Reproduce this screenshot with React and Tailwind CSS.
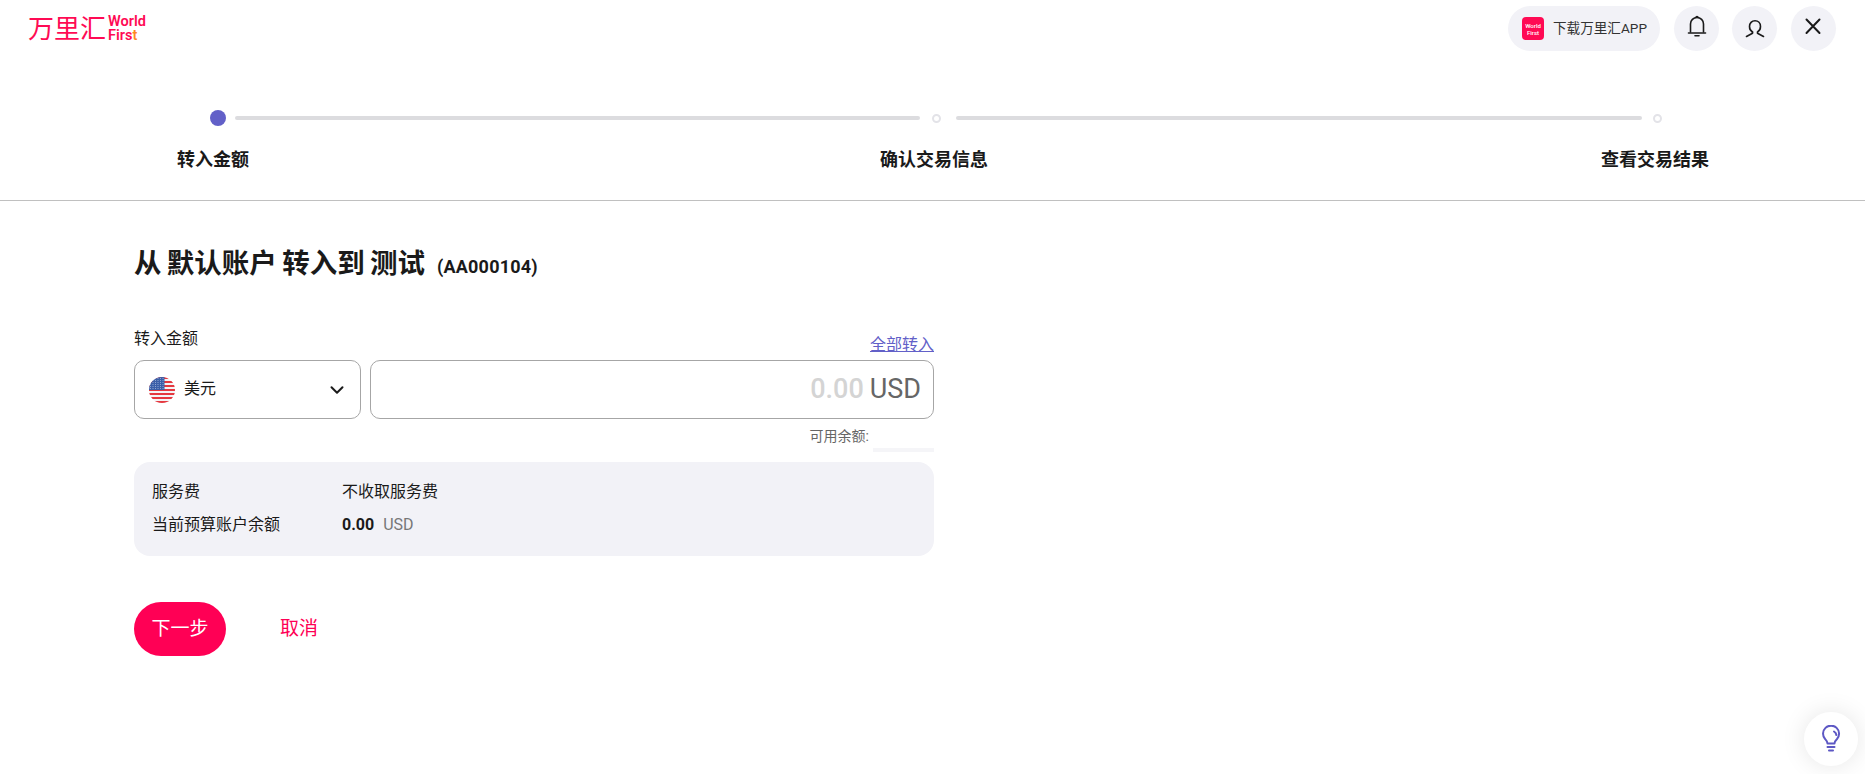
import { ChevronDown } from 'lucide-react'

const font = { fontFamily: 'Roboto, "Noto Sans CJK SC", sans-serif' }

const stripes = [0, 4, 8, 12, 16, 20, 24]
const starRows = [1.5, 3.5, 5.5, 7.5, 9.5, 11.5]
const starCols = [1.5, 4, 6.5, 9, 11.5, 14]

const UsFlag = () => (
  <svg width="26" height="26" viewBox="0 0 26 26">
    <defs>
      <clipPath id="flagClip">
        <circle cx="13" cy="13" r="13" />
      </clipPath>
    </defs>
    <g clipPath="url(#flagClip)">
      <rect width="26" height="26" fill="#f4f4f6" />
      {stripes.map((y) => (
        <rect key={y} y={y} width="26" height="2" fill="#e5383f" />
      ))}
      <rect width="15.5" height="13" fill="#3b5fa8" />
      {starRows.map((y) =>
        starCols.map((x) => <circle key={`${x}-${y}`} cx={x} cy={y} r="0.5" fill="#a9bce0" />)
      )}
    </g>
  </svg>
)

const Logo = () => (
  <div className="flex items-center text-[#ff0a54]">
    <span className="text-[26px] leading-none font-normal">万里汇</span>
    <span className="ml-[2px] flex flex-col text-[14.5px] leading-[14px] font-semibold">
      <span>World</span>
      <span>
        Firs<span className="text-[#ff8a1f]">t</span>
      </span>
    </span>
  </div>
)

const RoundButton = ({ className = '', children }) => (
  <button className={`w-[45px] h-[45px] rounded-full bg-[#f2f2f7] flex items-center justify-center ${className}`}>
    {children}
  </button>
)

const StepDot = ({ className = '' }) => (
  <span className={`block w-[9px] h-[9px] rounded-full border-2 border-[#e3e3e8] bg-white shrink-0 ${className}`} />
)

const App = () => {
  return (
    <div style={font} className="relative min-h-[774px] bg-white text-[#1a1a1a] overflow-hidden">
      <header className="h-[58px] flex items-start justify-between pt-[6px] pl-[28px] pr-[29px]">
        <div className="pt-[9px]">
          <Logo />
        </div>
        <div className="flex items-center">
          <button className="h-[45px] w-[152px] rounded-full bg-[#f2f2f7] flex items-center pl-[14px] text-[13.6px] text-[#333]">
            <span className="w-[22px] h-[23px] rounded-[4px] bg-[#ff0a54] text-white text-[6px] leading-[7px] font-medium flex flex-col items-center justify-center">
              <span>World</span>
              <span>First</span>
            </span>
            <span className="ml-[9px]">下载万里汇APP</span>
          </button>
          <RoundButton className="ml-[14px]">
            <svg width="24" height="24" viewBox="0 0 24 24" fill="none" stroke="#1a1a1a" strokeWidth="1.6" strokeLinecap="round" strokeLinejoin="round" className="-mt-[5px]">
              <path d="M5.5 18V10a6.5 6.5 0 0 1 13 0v8" />
              <path d="M3.5 19h17" />
              <path d="M10 21.8h4" />
              <path d="M11 3.5a1 1 0 0 1 2 0" />
            </svg>
          </RoundButton>
          <RoundButton className="ml-[13px]">
            <svg width="24" height="24" viewBox="0 0 24 24" fill="none" stroke="#1a1a1a" strokeWidth="1.6" strokeLinecap="round" strokeLinejoin="round">
              <path d="M9.5 15C7.3 13.8 6.5 11.7 6.5 9.5 6.5 6.2 8.8 3.8 12 3.8s5.5 2.4 5.5 5.7c0 2.2-.8 4.3-3 5.5v1.2l6 3.3" />
              <path d="M9.5 15v1.2l-6 3.3" />
            </svg>
          </RoundButton>
          <RoundButton className="ml-[14px]">
            <svg width="20" height="20" viewBox="0 0 20 20" fill="none" stroke="#1a1a1a" strokeWidth="2" strokeLinecap="round" className="-mt-[5px] -ml-[1px]">
              <path d="M3.5 3.5l13 13.5M16.5 3.5L3.5 17" />
            </svg>
          </RoundButton>
        </div>
      </header>

      <section className="h-[143px] border-b border-[#c0c0c0] pt-[52px]">
        <div className="flex items-center h-[16px] pl-[210px]">
          <span className="w-[16px] h-[16px] rounded-full bg-[#6260c8] shrink-0" />
          <span className="ml-[9px] w-[685px] h-[4px] rounded-full bg-[#dcdcdf]" />
          <StepDot className="ml-[12px]" />
          <span className="ml-[15px] w-[686px] h-[4px] rounded-full bg-[#dcdcdf]" />
          <StepDot className="ml-[11px]" />
        </div>
        <div className="flex mt-[21px] pl-[177px] text-[18px] leading-[26px] font-bold">
          <span>转入金额</span>
          <span className="ml-[631px]">确认交易信息</span>
          <span className="ml-[613px]">查看交易结果</span>
        </div>
      </section>

      <main className="pl-[134px] w-[934px]">
        <h1 className="mt-[44px] text-[27.5px] leading-[38px] font-bold flex items-baseline [word-spacing:-1.5px]">
          从 默认账户 转入到 测试
          <span className="ml-[12px] text-[18px] font-bold tracking-[0.2px]">(AA000104)</span>
        </h1>

        <div className="mt-[41px] flex items-end justify-between">
          <span className="text-[16px] leading-[24px]">转入金额</span>
          <a className="text-[16px] leading-[24px] -mb-[6px] text-[#6260c8] underline">全部转入</a>
        </div>

        <div className="mt-[9px] flex gap-[9px]">
          <div className="w-[227px] h-[59px] rounded-[10px] border border-[#a6a6a6] flex items-center pl-[14px] pr-[12px]">
            <UsFlag />
            <span className="ml-[9px] text-[16px] -mt-[1px]">美元</span>
            <ChevronDown size={22} strokeWidth={2.2} className="ml-auto text-[#1a1a1a]" />
          </div>
          <div className="flex-1 h-[59px] rounded-[10px] border border-[#a6a6a6] flex items-center justify-end pr-[12px] text-[27px]">
            <span className="text-[#d4d4d4] font-medium">0.00</span>
            <span className="ml-[6px] text-[#666]">USD</span>
          </div>
        </div>

        <div className="mt-[7px] flex justify-end">
          <span className="text-[14px] leading-[20px] text-[#666]">可用余额:</span>
          <span className="ml-[4px] w-[61px] h-[4px] mt-[22px] bg-[#f5f5f8]" />
        </div>

        <div className="mt-[10px] h-[94px] rounded-[16px] bg-[#f2f2f7] pl-[18px] pt-[18px] text-[16px]">
          <div className="flex h-[24px] items-center">
            <span className="w-[190px]">服务费</span>
            <span>不收取服务费</span>
          </div>
          <div className="flex h-[24px] mt-[9px] items-center">
            <span className="w-[190px]">当前预算账户余额</span>
            <span className="font-bold">0.00</span>
            <span className="ml-[9px] text-[16px] text-[#777]">USD</span>
          </div>
        </div>

        <div className="mt-[46px] flex items-center">
          <button className="w-[92px] h-[54px] rounded-full bg-[#ff0055] text-white text-[19px]">下一步</button>
          <button className="ml-[54px] text-[19px] text-[#ff0055]">取消</button>
        </div>
      </main>

      <button className="fixed left-[1804px] top-[712px] w-[54px] h-[54px] rounded-full bg-white shadow-[0_0_24px_rgba(0,0,0,0.1)] flex items-center justify-center">
        <svg width="24" height="28" viewBox="0 0 24 28" fill="none" stroke="#5d58c4" strokeWidth="2" strokeLinecap="round" strokeLinejoin="round">
          <path d="M8.5 18.5c0-2-1-3-2.4-4.5A8 8 0 1 1 18 14c-1.5 1.5-2.5 2.5-2.5 4.5z" />
          <path d="M15 6.5c1.3.8 2.2 2 2.4 3.5" />
          <path d="M8.5 22h7M10 25.5h4" />
        </svg>
      </button>
    </div>
  )
}

export default App
